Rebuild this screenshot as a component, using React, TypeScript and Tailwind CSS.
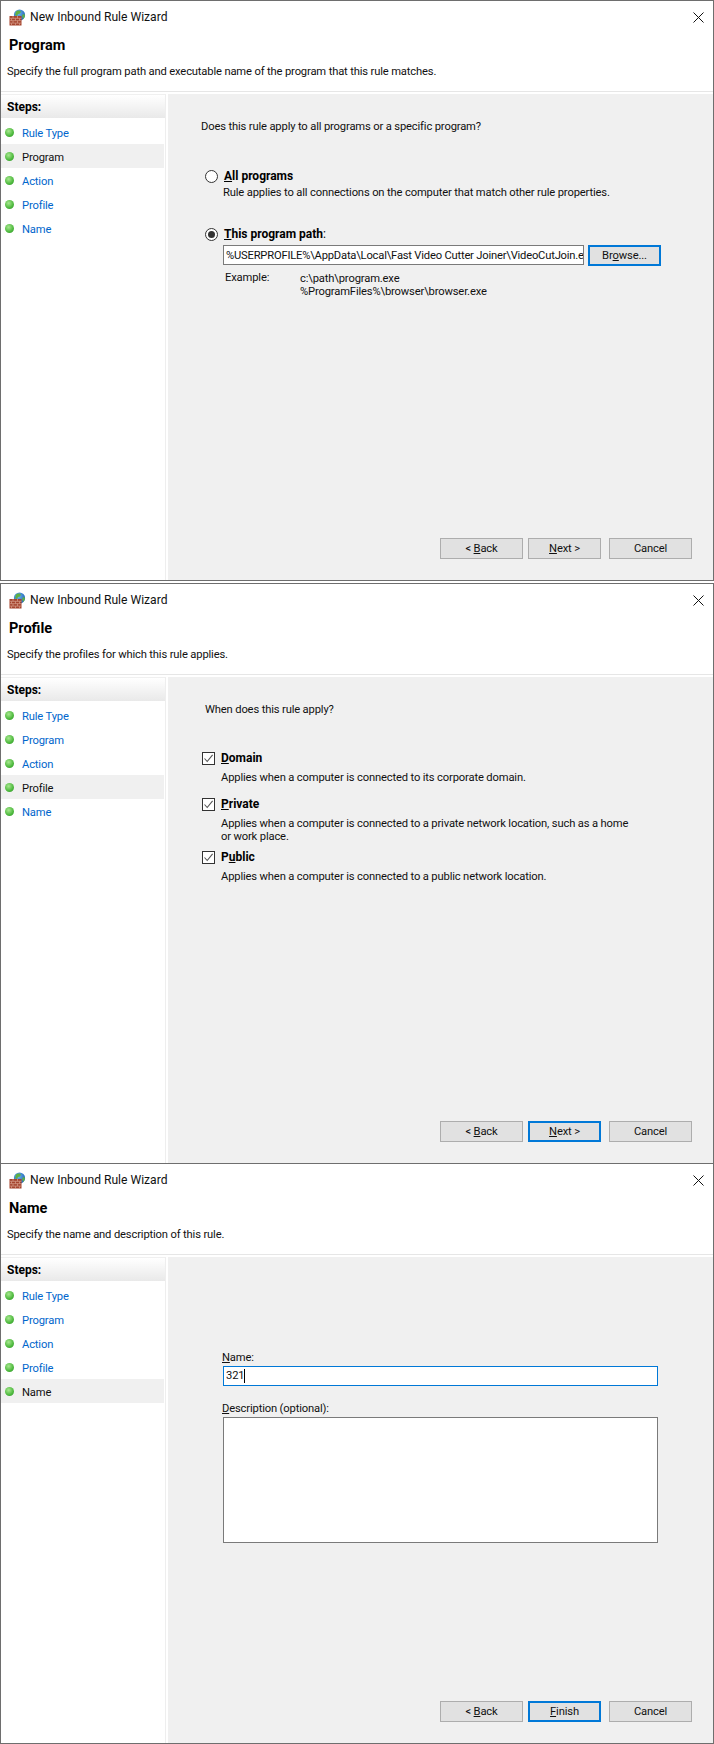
import React from "react";

const steps = ["Rule Type", "Program", "Action", "Profile", "Name"];

function AppIcon() {
  return (
    <svg width="17" height="17" viewBox="0 0 17 17" className="shrink-0">
      <defs>
        <radialGradient id="globe" cx="0.4" cy="0.35" r="0.7">
          <stop offset="0" stopColor="#6fb6ee" />
          <stop offset="1" stopColor="#1a5fb4" />
        </radialGradient>
      </defs>
      <circle cx="10.5" cy="6" r="5.6" fill="url(#globe)" />
      <path d="M7 2.5c2-1.5 4-1 5 0l-1 2-2 .5-1 2-2-1z" fill="#5fb043" />
      <path d="M13 6l2.5-1 .3 3-1.8 2z" fill="#5fb043" />
      <rect x="0.5" y="7" width="12" height="9.5" fill="#a5452f" />
      <path d="M0.5 9.3h12M0.5 11.7h12M0.5 14.1h12M4 7v2.3M8.5 7v2.3M2.5 9.3v2.4M6.5 9.3v2.4M10.5 9.3v2.4M4 11.7v2.4M8.5 11.7v2.4M2.5 14.1v2.4M6.5 14.1v2.4M10.5 14.1v2.4" stroke="#d9a18e" strokeWidth="0.7" fill="none" />
    </svg>
  );
}

function CloseIcon() {
  return (
    <svg width="11" height="11" viewBox="0 0 11 11">
      <path d="M0.5 0.5L10.5 10.5M10.5 0.5L0.5 10.5" stroke="#111" strokeWidth="1" fill="none" />
    </svg>
  );
}

function Bullet() {
  return (
    <span className="w-[9px] h-[9px] rounded-full shrink-0 bg-[radial-gradient(circle_at_40%_35%,#a8e890,#4cb83c_60%,#2f8f2a)]" />
  );
}

function Sidebar({ active }: { active: string }) {
  return (
    <div className="w-[165px] shrink-0 border-r border-[#eeeeee] bg-white">
      <div className="h-[24px] pl-[6px] flex items-center font-bold text-[12px] tracking-normal text-black bg-gradient-to-b from-white to-[#e9e9e9] border-t border-[#f0f0f0]">
        Steps:
      </div>
      <div className="mt-[2px] pr-px">
        {steps.map((s) => (
          <div
            key={s}
            className={
              s === active
                ? "h-[24px] flex items-center pl-[4px] gap-[8px] bg-[#f0f0f0] text-[#111]"
                : "h-[24px] flex items-center pl-[4px] gap-[8px] text-[#0066cc]"
            }
          >
            <Bullet />
            <span className="pt-[4px]">{s}</span>
          </div>
        ))}
      </div>
    </div>
  );
}

function Btn({ children, focus, className }: { children: React.ReactNode; focus?: boolean; className: string }) {
  return (
    <div
      className={
        (focus ? "border-2 border-[#0078d7] " : "border border-[#adadad] ") +
        "h-[21px] flex items-center justify-center pt-[2px] bg-[#e1e1e1] text-[#111] " +
        className
      }
    >
      {children}
    </div>
  );
}

function Footer({ nextLabel, focusNext }: { nextLabel: React.ReactNode; focusNext?: boolean }) {
  return (
    <div className="flex justify-end pr-[21px] pb-[21px]">
      <Btn className="w-[83px]">
        &lt;&nbsp;<u>B</u>ack
      </Btn>
      <Btn className="w-[73px] ml-[5px]" focus={focusNext}>
        {nextLabel}
      </Btn>
      <Btn className="w-[83px] ml-[8px]">Cancel</Btn>
    </div>
  );
}

function Wizard({
  title,
  subtitle,
  active,
  heightClass,
  topBorder,
  footer,
  children,
}: {
  title: string;
  subtitle: string;
  active: string;
  heightClass: string;
  topBorder: boolean;
  footer: React.ReactNode;
  children: React.ReactNode;
}) {
  return (
    <div
      className={
        (topBorder ? "border-t " : "") +
        "border-b border-x border-[#6e6e6e] bg-white flex flex-col " +
        heightClass
      }
    >
      <div className="h-[31px] shrink-0 flex items-center pl-[8px] pr-[9px] pt-px">
        <AppIcon />
        <span className="ml-[4px] flex-1 text-[#111] text-[12.1px] tracking-normal">New Inbound Rule Wizard</span>
        <CloseIcon />
      </div>
      <div className="pl-[8px] pt-[2px] mt-[5px] h-[16px] shrink-0 flex items-center text-[14.5px] tracking-normal font-bold text-black">{title}</div>
      <div className="pl-[6px] pt-[2px] mt-[10px] h-[16px] shrink-0 flex items-center text-[#111]">{subtitle}</div>
      <div className="mt-[12px] h-px shrink-0 bg-[#e6e6e6]" />
      <div className="mt-[2px] flex-1 flex min-h-0">
        <Sidebar active={active} />
        <div className="ml-[2px] flex-1 bg-[#f0f0f0] flex flex-col">
          <div className="flex-1">{children}</div>
          {footer}
        </div>
      </div>
    </div>
  );
}

function Radio({ checked }: { checked?: boolean }) {
  return (
    <span className="w-[13px] h-[13px] rounded-full border border-[#333333] bg-white flex items-center justify-center shrink-0">
      {checked ? <span className="w-[7px] h-[7px] rounded-full bg-[#333333]" /> : null}
    </span>
  );
}

function Check() {
  return (
    <span className="w-[13px] h-[13px] border border-[#333333] bg-white flex items-center justify-center shrink-0">
      <svg width="11" height="11" viewBox="0 0 11 11">
        <path d="M1.5 5.5L4.2 8.5L9.6 1.8" stroke="#555555" strokeWidth="1.1" fill="none" />
      </svg>
    </span>
  );
}

function Line({ className, children }: { className?: string; children: React.ReactNode }) {
  return <div className={"h-[16px] leading-[18px] whitespace-nowrap " + (className ?? "")}>{children}</div>;
}

function ProgramBody() {
  return (
    <div className="pt-[24px] pl-[33px] text-[#111]">
      <Line>Does this rule apply to all programs or a specific program?</Line>
      <div className="mt-[34px] flex items-center h-[16px] pl-[4px]">
        <Radio />
        <span className="ml-[6px] font-bold text-[12px] tracking-normal text-black">
          <u>A</u>ll programs
        </span>
      </div>
      <Line className="ml-[22px]">Rule applies to all connections on the computer that match other rule properties.</Line>
      <div className="mt-[26px] flex items-center h-[16px] pl-[4px]">
        <Radio checked />
        <span className="ml-[6px] font-bold text-[12px] tracking-normal text-black">
          <u>T</u>his program path<span className="font-normal">:</span>
        </span>
      </div>
      <div className="mt-[3px] ml-[22px] flex h-[21px]">
        <div className="w-[361px] h-[20px] border border-[#7a7a7a] bg-white pl-[2px] leading-[20px] overflow-hidden whitespace-nowrap tracking-[-0.2px]">
          %USERPROFILE%\AppData\Local\Fast Video Cutter Joiner\VideoCutJoin.e
        </div>
        <Btn focus className="w-[73px] ml-[4px]">
          Br<u>o</u>wse...
        </Btn>
      </div>
      <div className="mt-[3px] ml-[24px] flex">
        <span className="w-[75px] pt-[1px]">Example:</span>
        <div className="leading-[13px] pt-[3px]">
          <div>c:\path\program.exe</div>
          <div>%ProgramFiles%\browser\browser.exe</div>
        </div>
      </div>
    </div>
  );
}

function ProfileItem({ label, under, rest, lines }: { label?: string; under: string; rest: string; lines: string[] }) {
  return (
    <div>
      <div className="flex items-center h-[16px]">
        <Check />
        <span className="ml-[6px] font-bold text-[12px] tracking-normal text-black">
          {label}
          <u>{under}</u>
          {rest}
        </span>
      </div>
      <div className="mt-[3px] ml-[19px] leading-[13px] pt-[2px]">
        {lines.map((l) => (
          <div key={l} className="whitespace-nowrap">
            {l}
          </div>
        ))}
      </div>
    </div>
  );
}

function ProfileBody() {
  return (
    <div className="pt-[24px] pl-[33px] text-[#111]">
      <Line className="ml-[4px]">When does this rule apply?</Line>
      <div className="mt-[33px] flex flex-col ml-[1px]">
        <ProfileItem under="D" rest="omain" lines={["Applies when a computer is connected to its corporate domain."]} />
        <div className="h-[12px]" />
        <ProfileItem
          under="P"
          rest="rivate"
          lines={["Applies when a computer is connected to a private network location, such as a home", "or work place."]}
        />
        <div className="h-[6px]" />
        <ProfileItem label="P" under="u" rest="blic" lines={["Applies when a computer is connected to a public network location."]} />
      </div>
    </div>
  );
}

function NameBody() {
  return (
    <div className="pt-[92px] pl-[55px] text-[#111]">
      <Line className="ml-[-1px]">
        <u>N</u>ame:
      </Line>
      <div className="w-[435px] h-[20px] mt-[1px] border border-[#0078d7] bg-white pl-[2px] flex items-center">
        <span>321</span>
        <span className="w-px h-[14px] bg-black" />
      </div>
      <Line className="ml-[-1px] mt-[14px]">
        <u>D</u>escription (optional):
      </Line>
      <div className="w-[435px] h-[126px] mt-[1px] border border-[#7a7a7a] bg-white" />
    </div>
  );
}

export default function App() {
  return (
    <div className="w-[714px] h-[1744px] bg-white text-[11.2px] tracking-[-0.15px] font-['Roboto','Liberation_Sans',sans-serif] overflow-hidden">
      <Wizard
        title="Program"
        subtitle="Specify the full program path and executable name of the program that this rule matches."
        active="Program"
        heightClass="h-[581px]"
        topBorder
        footer={
          <Footer
            nextLabel={
              <>
                <u>N</u>ext&nbsp;&gt;
              </>
            }
          />
        }
      >
        <ProgramBody />
      </Wizard>
      <div className="h-[2px]" />
      <Wizard
        title="Profile"
        subtitle="Specify the profiles for which this rule applies."
        active="Profile"
        heightClass="h-[581px]"
        topBorder
        footer={
          <Footer
            focusNext
            nextLabel={
              <>
                <u>N</u>ext&nbsp;&gt;
              </>
            }
          />
        }
      >
        <ProfileBody />
      </Wizard>
      <Wizard
        title="Name"
        subtitle="Specify the name and description of this rule."
        active="Name"
        heightClass="h-[580px]"
        topBorder={false}
        footer={
          <Footer
            focusNext
            nextLabel={
              <>
                <u>F</u>inish
              </>
            }
          />
        }
      >
        <NameBody />
      </Wizard>
    </div>
  );
}
